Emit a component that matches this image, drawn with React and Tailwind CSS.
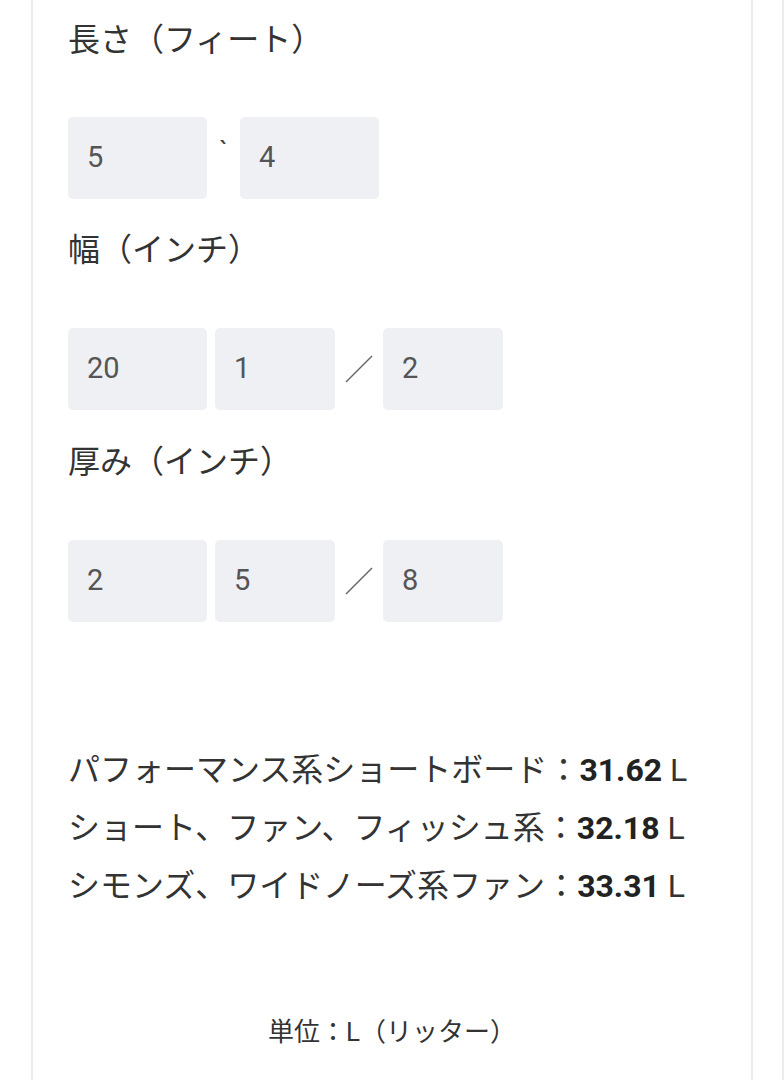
import React from 'react';

const font = { fontFamily: '"Roboto", "Noto Sans CJK JP", sans-serif' };

function Box({ value, wide }) {
  return (
    <div
      className={`${wide ? 'w-[139px]' : 'w-[120px]'} h-[82px] rounded-[5px] bg-[#eff0f4] flex items-center pl-[19px] text-[29px] text-[#555]`}
    >
      {value}
    </div>
  );
}

function Slash() {
  return (
    <div className="w-[48px] h-[82px] flex items-center justify-center">
      <svg width="28" height="28" viewBox="0 0 28 28">
        <line x1="1" y1="27" x2="27" y2="1" stroke="#666" strokeWidth="1.5" />
      </svg>
    </div>
  );
}

export default function App() {
  const results = [
    ['パフォーマンス系ショートボード', '31.62'],
    ['ショート、ファン、フィッシュ系', '32.18'],
    ['シモンズ、ワイドノーズ系ファン', '33.31'],
  ];

  return (
    <div className="w-[784px] h-[1080px] bg-white flex overflow-hidden" style={font}>
      <div className="ml-[31px] w-[722px] h-full border-x-2 border-[#ececec] pl-[35px] pt-[16px] text-[#333]">
        {/* Length */}
        <div className="text-[32px] leading-[48px]">長さ（フィート）</div>
        <div className="mt-[53px] flex">
          <Box value="5" wide />
          <div className="w-[33px] h-[82px] flex justify-center pt-[21px] text-[28px] leading-none text-[#444]">`</div>
          <Box value="4" wide />
        </div>

        {/* Width */}
        <div className="mt-[27px] text-[32px] leading-[48px]">幅（インチ）</div>
        <div className="mt-[54px] flex gap-[8px]">
          <Box value="20" wide />
          <div className="flex">
            <Box value="1" />
            <Slash />
            <Box value="2" />
          </div>
        </div>

        {/* Thickness */}
        <div className="mt-[28px] text-[32px] leading-[48px]">厚み（インチ）</div>
        <div className="mt-[54px] flex gap-[8px]">
          <Box value="2" wide />
          <div className="flex">
            <Box value="5" />
            <Slash />
            <Box value="8" />
          </div>
        </div>

        {/* Results */}
        <div className="mt-[119px] flex flex-col">
          {results.map(([name, val]) => (
            <div key={name} className="text-[32px] leading-[58px] whitespace-nowrap">
              {name}：<span className="font-bold text-[#222]">{val}</span> L
            </div>
          ))}
        </div>

        <div className="mt-[99px] pr-[35px] text-center text-[26px] leading-[36px]">単位：L（リッター）</div>
      </div>
      <div className="ml-auto w-[2px] h-full bg-[#ececec]" />
    </div>
  );
}
